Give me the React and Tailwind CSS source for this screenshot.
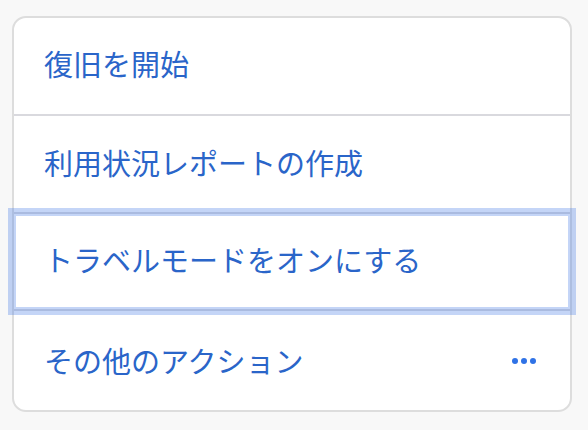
import React from "react";

const rows = [
  { id: "recover", label: "復旧を開始", h: "h-[96px] pb-[6px]" },
  { id: "usage", label: "利用状況レポートの作成", h: "h-[96px] pb-[4px]" },
  { id: "travel", label: "トラベルモードをオンにする", h: "h-[95px] pb-[4px]", focused: true },
  { id: "more", label: "その他のアクション", h: "h-[99px]", more: true },
];

const App = () => {
  return (
    <div
      className="min-h-screen bg-[#f8f8f8] pt-4"
      style={{ fontFamily: '"Noto Sans CJK JP", "Noto Sans", sans-serif' }}
    >
      <div className="ml-3 w-[560px] rounded-[14px] border-2 border-[#dddddd] bg-white">
        {rows.map((row, i) => (
          <React.Fragment key={row.id}>
            {i > 0 && <div className="h-[2px] bg-[#d9d9de]" />}
            <div
              className={`flex items-center justify-between pl-[30px] pr-[34px] ${row.h} ${
                row.focused
                  ? "relative z-10 outline-[8px] outline-solid outline-offset-[-2px] outline-[rgba(70,125,230,0.32)]"
                  : ""
              }`}
            >
              <span className="text-[29px] leading-none text-[#2a65c9]">{row.label}</span>
              {row.more && (
                <span className="flex items-center gap-[3px]">
                  <span className="h-[6px] w-[6px] rounded-full bg-[#2f72e6]" />
                  <span className="h-[6px] w-[6px] rounded-full bg-[#2f72e6]" />
                  <span className="h-[6px] w-[6px] rounded-full bg-[#2f72e6]" />
                </span>
              )}
            </div>
          </React.Fragment>
        ))}
      </div>
    </div>
  );
};

export default App;
